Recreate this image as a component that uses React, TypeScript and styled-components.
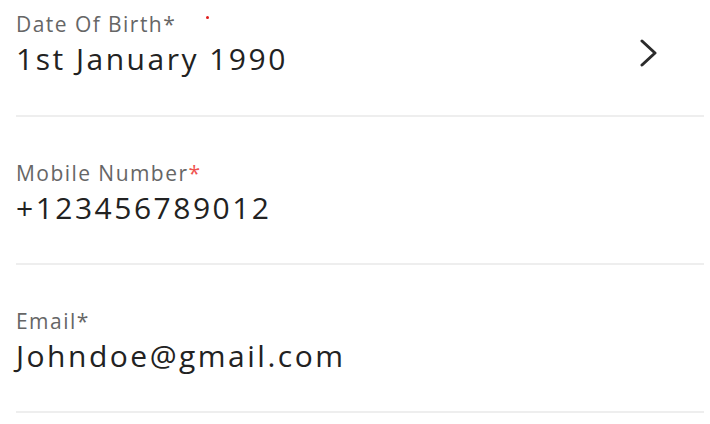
import styled, { createGlobalStyle } from 'styled-components';

const GlobalStyle = createGlobalStyle`
  body {
    margin: 0;
    background: #ffffff;
    font-family: 'Open Sans', 'Liberation Sans', sans-serif;
  }
`;

type FieldData = {
  label: string;
  value: string;
  requiredColor: 'red' | 'gray';
  chevron?: boolean;
  dot?: boolean;
};

const fields: FieldData[] = [
  { label: 'Date Of Birth', value: '1st January 1990', requiredColor: 'gray', chevron: true, dot: true },
  { label: 'Mobile Number', value: '+123456789012', requiredColor: 'red' },
  { label: 'Email', value: 'Johndoe@gmail.com', requiredColor: 'gray' }
];

function ChevronRight() {
  return (
    <svg width='20' height='30' viewBox='0 0 20 30' fill='none'>
      <polyline
        points='3,2 16,14 3,26'
        stroke='#2b2b2b'
        strokeWidth='3'
        strokeLinecap='round'
        strokeLinejoin='round'
      />
    </svg>
  );
}

export default function App() {
  return (
    <>
      <GlobalStyle />
      <Form>
        {fields.map((f) => (
          <Field key={f.label}>
            <Texts>
              <Label>
                {f.label}
                <Star $red={f.requiredColor === 'red'}>*</Star>
                {f.dot && <Dot />}
              </Label>
              <Value>{f.value}</Value>
            </Texts>
            {f.chevron && (
              <Action>
                <ChevronRight />
              </Action>
            )}
          </Field>
        ))}
      </Form>
    </>
  );
}

const Form = styled.div`
  display: flex;
  flex-direction: column;
  padding: 0 6px 0 16px;
`;

const Field = styled.div`
  height: 148px;
  box-sizing: border-box;
  display: flex;
  justify-content: space-between;
  align-items: flex-start;
  border-bottom: 2px solid #eeeeee;
  padding-top: 43px;

  &:first-child {
    height: 117px;
    padding-top: 11px;
  }
`;

const Texts = styled.div`
  display: flex;
  flex-direction: column;
`;

const Label = styled.div`
  position: relative;
  font-size: 21px;
  line-height: 26px;
  letter-spacing: 1.45px;
  color: #666666;
`;

const Star = styled.span<{ $red: boolean }>`
  color: ${(p) => (p.$red ? '#ef5350' : '#666666')};
`;

const Dot = styled.span`
  position: absolute;
  left: 190px;
  top: 5px;
  width: 3px;
  height: 3px;
  border-radius: 50%;
  background: #e01b1b;
`;

const Value = styled.div`
  font-size: 30px;
  line-height: 44px;
  letter-spacing: 2.5px;
  color: #222222;
`;

const Action = styled.div`
  display: flex;
  align-items: center;
  margin: 28px 45px 0 0;
`;
